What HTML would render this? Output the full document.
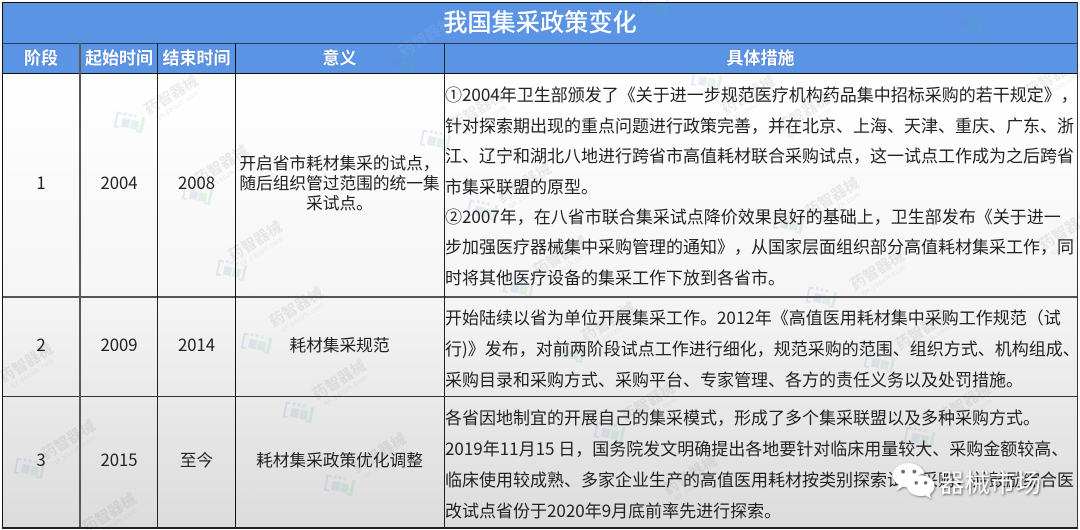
<!DOCTYPE html>
<html lang="zh">
<head>
<meta charset="utf-8">
<style>
html,body{margin:0;padding:0;width:1080px;height:530px;overflow:hidden;background:#fff}
body{position:relative;font-family:"Liberation Sans","Noto Sans CJK SC",sans-serif;text-spacing-trim:space-all;font-kerning:none;font-feature-settings:"palt" 0,"chws" 0}
.t,.c,.h,.title,.brand{font-family:"Noto Sans CJK SC","Liberation Sans",sans-serif}
.bg{position:absolute;left:3px;top:73px;width:1074px;height:454px;background:linear-gradient(#fff 0%,#f5f5f5 50%,#e9e9e9 72%,#dcdcdc 100%)}
.band{position:absolute;left:3px;top:3px;width:1074px;height:70px;background:#5b94e5}
.ln{position:absolute;background:#111}
.t{position:absolute;left:445px;font-size:17px;line-height:24px;height:24px;color:#222;white-space:nowrap;filter:blur(.25px)}
.c{position:absolute;font-size:16.7px;line-height:24px;height:24px;color:#222;text-align:center;white-space:nowrap;filter:blur(.25px)}
.h{position:absolute;top:43px;height:30px;line-height:28px;font-size:17px;font-weight:700;color:#fff;text-align:center;white-space:nowrap;text-shadow:0 0 1px rgba(30,60,120,.5)}
.title{position:absolute;left:0;top:2px;width:1080px;height:40px;line-height:38px;font-size:24.2px;font-weight:500;color:#fff;text-align:center;white-space:nowrap}
.w{position:absolute;width:70px;height:32px;margin:-10px 0 0 -35px;transform:rotate(-32deg);font-family:"Noto Sans CJK SC",sans-serif;color:rgba(110,120,135,.14);font-size:15px;font-weight:700;line-height:18px;white-space:nowrap;text-align:center}
.w small{display:block;font-size:7px;line-height:8px;font-weight:400;font-family:"Liberation Sans",sans-serif;letter-spacing:.6px}
.lg{position:absolute;width:36px;height:24px;overflow:visible;opacity:.75}
.brand{position:absolute;left:939px;top:466px;font-size:25.5px;line-height:32px;color:#fff;white-space:nowrap;text-shadow:1px 1px 2px rgba(0,0,0,.6)}
</style>
</head>
<body>
<svg width="0" height="0" style="position:absolute"><symbol id="m" viewBox="0 0 36 24"><g transform="rotate(12 18 12)"><path d="M5 4h5v2H7v12h3v2H5z" fill="#6f86c9" opacity=".22"/><rect x="12" y="9" width="8" height="9" fill="#6f86c9" opacity=".2"/><rect x="21" y="9" width="8" height="9" fill="#58b98d" opacity=".2"/><rect x="12" y="3" width="3" height="3" fill="#6f86c9" opacity=".2"/><rect x="17" y="3" width="3" height="3" fill="#6f86c9" opacity=".2"/><rect x="22" y="3" width="3" height="3" fill="#58b98d" opacity=".2"/><path d="M31 4h3v16h-6v-2h3z" fill="#58b98d" opacity=".22"/></g></symbol></svg>

<div class="bg"></div>

<!-- watermarks -->
<div class="w" style="left:175px;top:95px">药智器械<small>qx.yaozh.com</small></div>
<div class="w" style="left:225px;top:165px">药智器械<small>qx.yaozh.com</small></div>
<div class="w" style="left:259px;top:241px">药智器械<small>qx.yaozh.com</small></div>
<div class="w" style="left:300px;top:307px">药智器械<small>qx.yaozh.com</small></div>
<div class="w" style="left:343px;top:380px">药智器械<small>qx.yaozh.com</small></div>
<div class="w" style="left:383px;top:453px">药智器械<small>qx.yaozh.com</small></div>
<div class="w" style="left:30px;top:363px">药智器械<small>qx.yaozh.com</small></div>
<div class="w" style="left:72px;top:440px">药智器械<small>qx.yaozh.com</small></div>
<div class="w" style="left:113px;top:513px">药智器械<small>qx.yaozh.com</small></div>
<div class="w" style="left:481px;top:110px">药智器械<small>qx.yaozh.com</small></div>
<div class="w" style="left:528px;top:183px">药智器械<small>qx.yaozh.com</small></div>
<div class="w" style="left:564px;top:256px">药智器械<small>qx.yaozh.com</small></div>
<div class="w" style="left:612px;top:322px">药智器械<small>qx.yaozh.com</small></div>
<div class="w" style="left:652px;top:402px">药智器械<small>qx.yaozh.com</small></div>
<div class="w" style="left:694px;top:475px">药智器械<small>qx.yaozh.com</small></div>
<div class="w" style="left:752px;top:95px">药智器械<small>qx.yaozh.com</small></div>
<div class="w" style="left:807px;top:113px">药智器械<small>qx.yaozh.com</small></div>
<div class="w" style="left:836px;top:197px">药智器械<small>qx.yaozh.com</small></div>
<div class="w" style="left:881px;top:270px">药智器械<small>qx.yaozh.com</small></div>
<div class="w" style="left:926px;top:330px">药智器械<small>qx.yaozh.com</small></div>
<div class="w" style="left:968px;top:403px">药智器械<small>qx.yaozh.com</small></div>
<div class="w" style="left:1056px;top:77px">药智器械<small>qx.yaozh.com</small></div>
<div class="w" style="left:1070px;top:230px">药智器械<small>qx.yaozh.com</small></div>

<svg class="lg" style="left:110px;top:110px"><use href="#m"/></svg>
<svg class="lg" style="left:178px;top:182px"><use href="#m"/></svg>
<svg class="lg" style="left:212px;top:258px"><use href="#m"/></svg>
<svg class="lg" style="left:237px;top:331px"><use href="#m"/></svg>
<svg class="lg" style="left:279px;top:400px"><use href="#m"/></svg>
<svg class="lg" style="left:320px;top:473px"><use href="#m"/></svg>
<svg class="lg" style="left:10px;top:456px"><use href="#m"/></svg>
<svg class="lg" style="left:416px;top:128px"><use href="#m"/></svg>
<svg class="lg" style="left:463px;top:198px"><use href="#m"/></svg>
<svg class="lg" style="left:499px;top:275px"><use href="#m"/></svg>
<svg class="lg" style="left:550px;top:340px"><use href="#m"/></svg>
<svg class="lg" style="left:590px;top:420px"><use href="#m"/></svg>
<svg class="lg" style="left:687px;top:68px"><use href="#m"/></svg>
<svg class="lg" style="left:769px;top:211px"><use href="#m"/></svg>
<svg class="lg" style="left:802px;top:285px"><use href="#m"/></svg>
<svg class="lg" style="left:860px;top:350px"><use href="#m"/></svg>
<svg class="lg" style="left:900px;top:425px"><use href="#m"/></svg>

<div class="band"></div>
<div class="w" style="left:430px;top:37px;color:rgba(255,255,255,.07)">药智器械</div>
<svg class="lg" style="left:380px;top:51px"><use href="#m"/></svg>
<svg class="lg" style="left:634px;top:-7px"><use href="#m"/></svg>
<svg class="lg" style="left:948px;top:11px"><use href="#m"/></svg>

<!-- grid -->
<div class="ln" style="left:2px;top:2px;width:1076px;height:1px"></div>
<div class="ln" style="left:2px;top:527px;width:1076px;height:1.5px;background:#222"></div>
<div class="ln" style="left:2px;top:2px;width:1px;height:526px"></div>
<div class="ln" style="left:1077px;top:2px;width:1px;height:526px;background:#333"></div>
<div class="ln" style="left:3px;top:43px;width:1074px;height:1px;background:#2b3f63"></div>
<div class="ln" style="left:3px;top:73px;width:1074px;height:1px"></div>
<div class="ln" style="left:3px;top:296px;width:1074px;height:2px;background:#555"></div>
<div class="ln" style="left:3px;top:396px;width:1074px;height:1px;background:#333"></div>
<div class="ln" style="left:79px;top:43px;width:2px;height:484px;background:#5a5a5a"></div>
<div class="ln" style="left:157px;top:43px;width:1px;height:484px;background:#222"></div>
<div class="ln" style="left:235px;top:43px;width:1px;height:484px"></div>
<div class="ln" style="left:443.5px;top:43px;width:1px;height:484px;background:#222"></div>

<!-- titles -->
<div class="title">我国集采政策变化</div>
<div class="h" style="left:3px;width:76px">阶段</div>
<div class="h" style="left:81px;width:76px">起始时间</div>
<div class="h" style="left:158px;width:77px">结束时间</div>
<div class="h" style="left:236px;width:207px">意义</div>
<div class="h" style="left:444px;width:633px">具体措施</div>

<!-- row 1 -->
<div class="c" style="left:3px;width:76px;top:170px">1</div>
<div class="c" style="left:81px;width:76px;top:170px">2004</div>
<div class="c" style="left:158px;width:77px;top:170px">2008</div>
<div class="c" style="left:236px;width:207px;top:150px">开启省市耗材集采的试点，</div>
<div class="c" style="left:236px;width:207px;top:170px">随后组织管过范围的统一集</div>
<div class="c" style="left:236px;width:207px;top:190px">采试点。</div>

<div class="t" style="top:82px">①2004年卫生部颁发了《关于进一步规范医疗机构药品集中招标采购的若干规定》，</div>
<div class="t" style="top:113px">针对探索期出现的重点问题进行政策完善，并在北京、上海、天津、重庆、广东、浙</div>
<div class="t" style="top:143px">江、辽宁和湖北八地进行跨省市高值耗材联合采购试点，这一试点工作成为之后跨省</div>
<div class="t" style="top:174px">市集采联盟的原型。</div>
<div class="t" style="top:204px">②2007年，在八省市联合集采试点降价效果良好的基础上，卫生部发布《关于进一</div>
<div class="t" style="top:234px">步加强医疗器械集中采购管理的通知》，从国家层面组织部分高值耗材集采工作，同</div>
<div class="t" style="top:265px">时将其他医疗设备的集采工作下放到各省市。</div>

<!-- row 2 -->
<div class="c" style="left:3px;width:76px;top:332px">2</div>
<div class="c" style="left:81px;width:76px;top:332px">2009</div>
<div class="c" style="left:158px;width:77px;top:332px">2014</div>
<div class="c" style="left:236px;width:207px;top:332px">耗材集采规范</div>
<div class="t" style="top:305px">开始陆续以省为单位开展集采工作。2012年《高值医用耗材集中采购工作规范（试</div>
<div class="t" style="top:336px">行)》发布，对前两阶段试点工作进行细化，规范采购的范围、组织方式、机构组成、</div>
<div class="t" style="top:367px">采购目录和采购方式、采购平台、专家管理、各方的责任义务以及处罚措施。</div>

<!-- row 3 -->
<div class="c" style="left:3px;width:76px;top:447px">3</div>
<div class="c" style="left:81px;width:76px;top:447px">2015</div>
<div class="c" style="left:158px;width:77px;top:447px">至今</div>
<div class="c" style="left:236px;width:207px;top:447px">耗材集采政策优化调整</div>
<div class="t" style="top:405px">各省因地制宜的开展自己的集采模式，形成了多个集采联盟以及多种采购方式。</div>
<div class="t" style="top:436px">2019年11月15 日，国务院发文明确提出各地要针对临床用量较大、采购金额较高、</div>
<div class="t" style="top:467px">临床使用较成熟、多家企业生产的高值医用耗材按类别探索试点采购，并鼓励综合医</div>
<div class="t" style="top:498px">改试点省份于2020年9月底前率先进行探索。</div>

<!-- wechat -->
<svg style="position:absolute;left:890px;top:460px;filter:drop-shadow(1px 1px 1px rgba(0,0,0,.45))" width="45" height="40" viewBox="0 0 48 42">
<path d="M20 3C10 3 3 9 3 16c0 4 2 7 6 10l-2 6 7-4c2 .6 4 1 6 1 1 0 2 0 3-.2C22 22 27 15 37 14 35 8 28 3 20 3z" fill="#fff"/>
<circle cx="14" cy="12" r="2" fill="#6a6a6a"/><circle cx="26" cy="12" r="2" fill="#6a6a6a"/>
<path d="M33 16c-9 0-15 5-15 11s6 11 15 11c2 0 3 0 5-.6L44 41l-1.500-5c3-2 5-5 5-9 0-6-6-11-14.500-11z" fill="#fff"/>
<circle cx="28" cy="24" r="1.800" fill="#6a6a6a"/><circle cx="38" cy="24" r="1.800" fill="#6a6a6a"/>
</svg>
<div class="brand">器械市场</div>
</body>
</html>
